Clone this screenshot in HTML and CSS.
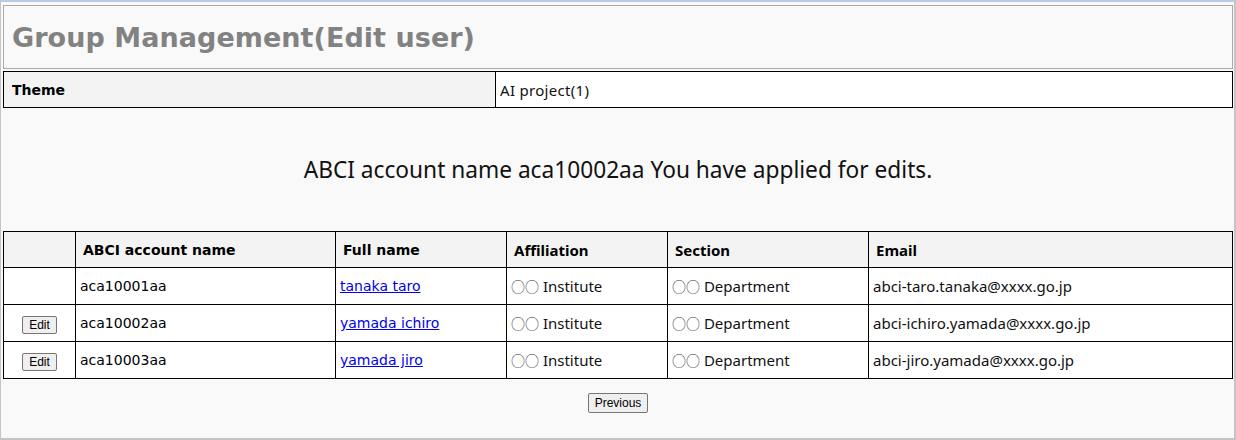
FILE: index.html
```html
<!DOCTYPE html>
<html>
<head>
<meta charset="utf-8">
<link rel="stylesheet" href="styles.css">
</head>
<body>
<div class="page">
  <div class="title-box"><h1 class="title">Group Management(Edit user)</h1></div>
  <table class="theme">
    <tr><th class="theme-label">Theme</th><td class="theme-value">AI project(1)</td></tr>
  </table>
  <p class="message">ABCI account name aca10002aa You have applied for edits.</p>
  <table class="users">
    <colgroup>
      <col class="c-btn"><col class="c-acct"><col class="c-name"><col class="c-aff"><col class="c-sec"><col class="c-mail">
    </colgroup>
    <thead>
      <tr><th></th><th>ABCI account name</th><th>Full name</th><th class="m">Affiliation</th><th class="m">Section</th><th class="m">Email</th></tr>
    </thead>
    <tbody>
      <tr><td></td><td>aca10001aa</td><td><a href="#">tanaka taro</a></td><td class="m"><span class="circ">○○</span> Institute</td><td class="m"><span class="circ">○○</span> Department</td><td class="m">abci-taro.tanaka@xxxx.go.jp</td></tr>
      <tr><td class="btn-cell"><button class="btn">Edit</button></td><td>aca10002aa</td><td><a href="#">yamada ichiro</a></td><td class="m"><span class="circ">○○</span> Institute</td><td class="m"><span class="circ">○○</span> Department</td><td class="m">abci-ichiro.yamada@xxxx.go.jp</td></tr>
      <tr><td class="btn-cell"><button class="btn">Edit</button></td><td>aca10003aa</td><td><a href="#">yamada jiro</a></td><td class="m"><span class="circ">○○</span> Institute</td><td class="m"><span class="circ">○○</span> Department</td><td class="m">abci-jiro.yamada@xxxx.go.jp</td></tr>
    </tbody>
  </table>
  <div class="actions"><button class="btn btn-prev">Previous</button></div>
</div>
</body>
</html>
```

FILE: styles.css
```css
html, body { margin: 0; padding: 0; }
body { font-family: "DejaVu Sans", sans-serif; color: #000; }
.page {
  box-sizing: border-box;
  width: 1236px;
  height: 440px;
  border-top: 2px solid #b7cde4;
  border-left: 1px solid #c4c4c4;
  border-right: 2px solid #c4c4c4;
  border-bottom: 2px solid #c4c4c4;
  background: #f9f9f9;
  padding: 3px 1px 0 2px;
}
.title-box {
  border: 1px solid #aaaaaa;
  height: 64px;
  box-sizing: border-box;
  display: flex;
  align-items: center;
  padding-left: 8px;
}
.title {
  margin: 0;
  font-family: "DejaVu Sans", sans-serif;
  font-weight: bold;
  font-size: 27px;
  color: #828282;
  letter-spacing: 0.05px;
}
table { border-collapse: collapse; width: 100%; }
.theme { margin-top: 2px; }
.theme th, .theme td { border: 1px solid #000; height: 35px; padding: 0 7px; text-align: left; }
.theme-label { width: 476px; background: #f3f3f3; font-size: 14px; font-weight: bold; padding-left: 8px !important; }
.theme-value { background: #fff; font-family: "Noto Sans", sans-serif; font-size: 15px; padding-left: 4px !important; color: #111; letter-spacing: 0.3px; }
.message {
  margin: 0;
  height: 123px;
  display: flex;
  align-items: center;
  justify-content: center;
  font-family: "Noto Sans", sans-serif;
  font-size: 22.7px;
  box-sizing: border-box;
  color: #111;
}
.users th, .users td { border: 1px solid #000; text-align: left; }
.users th { height: 35px; padding: 0 7px; background: #f3f3f3; font-size: 14px; font-weight: bold; }
.users td { height: 36px; padding: 0 4px; background: #fff; font-size: 14px; }
.users td.m { font-family: "Noto Sans", sans-serif; font-size: 15px; color: #111; }
.users th.m { font-family: "Noto Sans", sans-serif; font-weight: bold; font-size: 15px; }
.users td.btn-cell { height: 32px; padding-top: 4px; text-align: center; }
.circ { font-family: "Noto Sans CJK JP", sans-serif; font-size: 14px; font-weight: 300; color: #333; }
.c-btn { width: 72px; }
.c-acct { width: 260px; }
.c-name { width: 171px; }
.c-aff { width: 161px; }
.c-sec { width: 201px; }
.users a { color: #0000ee; }
.btn {
  font-family: "Liberation Sans", Arial, sans-serif;
  font-size: 12px;
  padding: 0 6px;
  border: 1px solid #767676;
  border-radius: 2px;
  background: #efefef;
  color: #000;
  height: 18px;
  line-height: 15px;
}
.btn-prev { height: 20px; }
.actions { display: flex; justify-content: center; padding-top: 14px; }
```
